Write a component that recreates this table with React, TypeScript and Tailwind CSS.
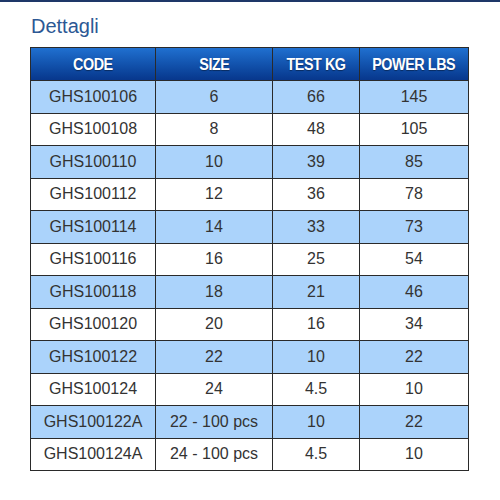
const rows: [string, string, string, string][] = [
  ["GHS100106", "6", "66", "145"],
  ["GHS100108", "8", "48", "105"],
  ["GHS100110", "10", "39", "85"],
  ["GHS100112", "12", "36", "78"],
  ["GHS100114", "14", "33", "73"],
  ["GHS100116", "16", "25", "54"],
  ["GHS100118", "18", "21", "46"],
  ["GHS100120", "20", "16", "34"],
  ["GHS100122", "22", "10", "22"],
  ["GHS100124", "24", "4.5", "10"],
  ["GHS100122A", "22 - 100 pcs", "10", "22"],
  ["GHS100124A", "24 - 100 pcs", "4.5", "10"],
];

const headers = ["CODE", "SIZE", "TEST KG", "POWER LBS"];
const widths = ["w-[125px]", "w-[117px]", "w-[87px]", "w-[109px]"];

export default function App() {
  return (
    <div className="w-[500px] h-[500px] bg-white font-['Liberation_Sans',sans-serif]">
      <div className="h-[2px] bg-[#1e3768]" />
      <div className="pl-[30px] pt-[12px]">
        <h2 className="text-[20px] leading-[24px] text-[#2c5894] pl-[1px]">Dettagli</h2>
        <table className="mt-[9px] border-collapse w-[438px] table-fixed">
          <thead>
            <tr className="h-[33px] bg-gradient-to-b from-[#2070d0] to-[#07358a]">
              {headers.map((h, i) => (
                <th
                  key={h}
                  className={`${widths[i]} border border-[#2a2a2a] text-white font-bold text-[16.5px] tracking-[-0.5px] text-center p-0 [text-shadow:0_1px_1px_rgba(0,0,0,0.4)]`}
                >
                  <span className="inline-block whitespace-nowrap scale-x-[0.87]">{h}</span>
                </th>
              ))}
            </tr>
          </thead>
          <tbody>
            {rows.map((r, idx) => (
              <tr key={r[0]} className={`h-[32.5px] ${idx % 2 === 0 ? "bg-[#abd3fb]" : "bg-white"}`}>
                {r.map((c, i) => (
                  <td
                    key={i}
                    className="border border-[#2a2a2a] text-center text-[16px] text-[#333333] p-0"
                  >
                    {c}
                  </td>
                ))}
              </tr>
            ))}
          </tbody>
        </table>
      </div>
    </div>
  );
}
